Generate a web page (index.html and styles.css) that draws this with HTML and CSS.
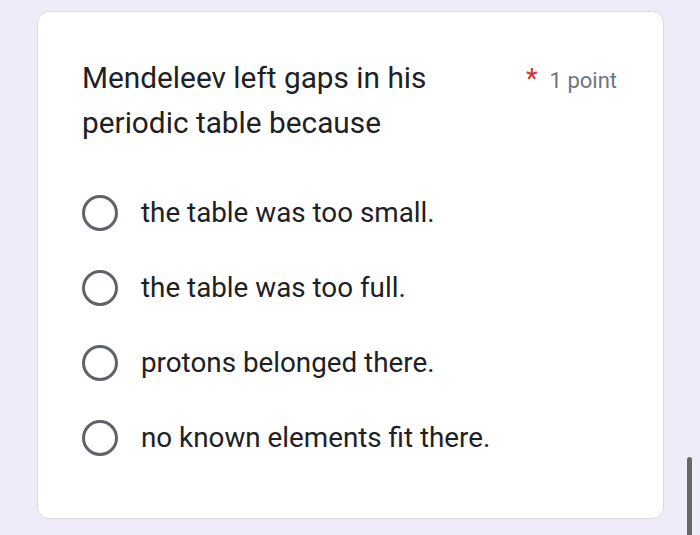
FILE: index.html
```html
<!DOCTYPE html>
<html>
<head>
<meta charset="utf-8">
<link rel="stylesheet" href="styles.css">
</head>
<body>
<div class="page">
  <div class="card">
    <div class="header">
      <div class="title">Mendeleev left gaps in his periodic table because</div>
      <div class="points"><span class="star">*</span><span class="pt">1 point</span></div>
    </div>
    <div class="options">
      <div class="option"><span class="radio"></span><span class="label">the table was too small.</span></div>
      <div class="option"><span class="radio"></span><span class="label">the table was too full.</span></div>
      <div class="option"><span class="radio"></span><span class="label">protons belonged there.</span></div>
      <div class="option"><span class="radio"></span><span class="label">no known elements fit there.</span></div>
    </div>
  </div>
</div>
<div class="scrollbar"></div>
</body>
</html>
```
FILE: styles.css
```css
html, body {
  margin: 0;
  padding: 0;
  height: 100%;
  overflow: hidden;
}
body {
  background: #f0ebf8;
  font-family: Roboto, "Liberation Sans", Arial, sans-serif;
  color: #202124;
}
.page {
  padding: 11px 0 0 37px;
}
.card {
  box-sizing: border-box;
  width: 627px;
  height: 508px;
  background: #ffffff;
  border: 1px solid #dadce0;
  border-radius: 12px;
  padding: 43px 46px 0 44px;
}
.header {
  display: flex;
  justify-content: space-between;
  align-items: flex-start;
}
.title {
  width: 420px;
  font-size: 29.8px;
  line-height: 45px;
}
.points {
  display: flex;
  align-items: baseline;
  margin-top: 2px;
  font-size: 22px;
  line-height: 45px;
}
.star {
  color: #d93025;
  font-size: 27px;
  margin-right: 12px;
}
.pt {
  color: #70757a;
}
.options {
  margin-top: 30px;
  display: flex;
  flex-direction: column;
}
.option {
  height: 75px;
  display: flex;
  align-items: center;
}
.radio {
  box-sizing: border-box;
  width: 36px;
  height: 36px;
  border: 3px solid #5f6368;
  border-radius: 50%;
  margin-right: 23px;
  flex: none;
}
.label {
  font-size: 27.8px;
}
.scrollbar {
  position: absolute;
  left: 687px;
  top: 457px;
  width: 5px;
  height: 80px;
  background: #67676b;
  border-radius: 3px;
}
```
